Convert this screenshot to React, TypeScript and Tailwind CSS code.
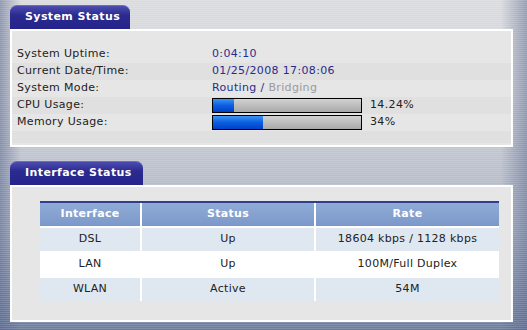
const font = "font-['DejaVu_Sans','Verdana',sans-serif]";

const rows = [
  { label: 'System Uptime:', value: '0:04:10' },
  { label: 'Current Date/Time:', value: '01/25/2008 17:08:06' },
  { label: 'System Mode:', value: 'mode' },
  { label: 'CPU Usage:', value: 'bar', pct: 14.24, text: '14.24%' },
  { label: 'Memory Usage:', value: 'bar', pct: 34, text: '34%' },
];

const ifaces = [
  { name: 'DSL', status: 'Up', rate: '18604 kbps / 1128 kbps' },
  { name: 'LAN', status: 'Up', rate: '100M/Full Duplex' },
  { name: 'WLAN', status: 'Active', rate: '54M' },
];

function Tab({ title, width }: { title: string; width: string }) {
  return (
    <div
      className={`${width} h-[24px] flex items-center pl-[15px] rounded-t-[7px] bg-[linear-gradient(to_bottom,#4d4db0,#2a2a90_40%,#24248a)] border-t border-[#6a6ac0] text-white font-bold text-[11px] tracking-[0.4px]`}
    >
      {title}
    </div>
  );
}

function Bar({ pct }: { pct: number }) {
  return (
    <div className="w-[150px] h-[15px] border border-black bg-[linear-gradient(to_bottom,#d2d2d2,#a9a9a9)] flex">
      <div
        className="h-full bg-[linear-gradient(to_bottom,#3c94f4,#0a5ee0_50%,#0040c8)]"
        style={{ width: `${pct}%` }}
      />
    </div>
  );
}

export default function App() {
  return (
    <div
      className={`${font} w-[527px] h-[330px] overflow-hidden pt-[5px] pl-[10px] bg-[repeating-linear-gradient(to_bottom,rgba(255,255,255,0.14)_0px,rgba(255,255,255,0.14)_1px,transparent_1px,transparent_2px),linear-gradient(to_right,rgba(80,95,135,0.55),rgba(80,95,135,0)_4%,rgba(80,95,135,0)_95%,rgba(80,95,135,0.5)),linear-gradient(to_bottom,#dadbde,#cfd2d8_30%,#a8b0c2_70%,#6d7c9d)]`}
    >
      <Tab title="System Status" width="w-[120px]" />
      <div className="w-[503px] h-[118px] border-2 border-white bg-[#e6e6e6] pt-[15px] pl-[5px] text-[11px] tracking-[0.35px]">
        {rows.map((r, i) => (
          <div
            key={r.label}
            className={`h-[17px] flex items-center ${i % 2 === 1 ? 'bg-[#e0e0e0]' : 'bg-[#e6e6e6]'} -ml-[5px] pl-[5px]`}
          >
            <span className="w-[195px] text-[#222]">{r.label}</span>
            {r.value === 'bar' ? (
              <div className="flex items-center gap-[8px]">
                <Bar pct={r.pct!} />
                <span className="text-[#222]">{r.text}</span>
              </div>
            ) : r.value === 'mode' ? (
              <span className="text-[#2b2b8c]">
                Routing / <span className="text-[#9a9a9a]">Bridging</span>
              </span>
            ) : (
              <span className="text-[#2b2b8c]">{r.value}</span>
            )}
          </div>
        ))}
        <div className="h-[12px] -ml-[5px] bg-[#e0e0e0]" />
      </div>

      <div className="h-[14px]" />
      <Tab title="Interface Status" width="w-[133px]" />
      <div className="w-[503px] h-[137px] border-2 border-white bg-[#e6e6e6] pt-[14px] pl-[28px]">
        <div className="w-[459px] bg-white border-t-2 border-[#2d3f8e] text-[11px] tracking-[0.3px]">
          <div className="grid grid-cols-[100px_172px_183px] gap-x-[2px] h-[23px] bg-white">
            {['Interface', 'Status', 'Rate'].map((h) => (
              <div
                key={h}
                className="flex items-center justify-center font-bold text-white bg-[linear-gradient(to_bottom,#90abd6,#7b98c9)]"
              >
                {h}
              </div>
            ))}
          </div>
          {ifaces.map((r, i) => (
            <div
              key={r.name}
              className="grid grid-cols-[100px_172px_183px] gap-x-[2px] h-[25px] pt-[2px] bg-white"
            >
              {[r.name, r.status, r.rate].map((c, j) => (
                <div
                  key={j}
                  className={`flex items-center justify-center text-[#222] ${i % 2 === 0 ? 'bg-[#dfe7f1]' : 'bg-white'}`}
                >
                  {c}
                </div>
              ))}
            </div>
          ))}
        </div>
      </div>
    </div>
  );
}
